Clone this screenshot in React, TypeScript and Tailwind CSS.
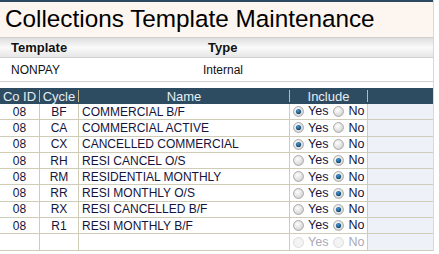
import React from "react";

type Row = { co: string; cycle: string; name: string; yes: boolean | null };

const rows: Row[] = [
  { co: "08", cycle: "BF", name: "COMMERCIAL B/F", yes: true },
  { co: "08", cycle: "CA", name: "COMMERCIAL ACTIVE", yes: true },
  { co: "08", cycle: "CX", name: "CANCELLED COMMERCIAL", yes: true },
  { co: "08", cycle: "RH", name: "RESI CANCEL O/S", yes: false },
  { co: "08", cycle: "RM", name: "RESIDENTIAL MONTHLY", yes: false },
  { co: "08", cycle: "RR", name: "RESI MONTHLY O/S", yes: false },
  { co: "08", cycle: "RX", name: "RESI CANCELLED B/F", yes: false },
  { co: "08", cycle: "R1", name: "RESI MONTHLY B/F", yes: false },
];

function Radio({ checked, disabled }: { checked: boolean; disabled?: boolean }) {
  return (
    <svg width="11" height="11" viewBox="0 0 12 12" className="shrink-0">
      <defs>
        <radialGradient id="rg" cx="40%" cy="35%" r="70%">
          <stop offset="0%" stopColor="#ffffff" />
          <stop offset="100%" stopColor="#d0d0d0" />
        </radialGradient>
        <radialGradient id="dot" cx="40%" cy="35%" r="70%">
          <stop offset="0%" stopColor="#4a9ad0" />
          <stop offset="100%" stopColor="#0b3d66" />
        </radialGradient>
      </defs>
      <circle
        cx="6"
        cy="6"
        r="5.4"
        fill={disabled ? "#f4f4f4" : "url(#rg)"}
        stroke={disabled ? "#d8d8d8" : "#a4a4a4"}
        strokeWidth="1"
      />
      {checked && <circle cx="6" cy="6" r="2.8" fill="url(#dot)" />}
    </svg>
  );
}

function Include({ yes, disabled }: { yes: boolean | null; disabled?: boolean }) {
  const txt = disabled ? "text-[#a9a9b8]" : "text-[#14143c]";
  return (
    <div className={`flex items-center pl-[3px] text-[12.5px] ${txt}`}>
      <Radio checked={yes === true} disabled={disabled} />
      <span className="ml-[4px]">Yes</span>
      <span className="ml-[5px]">
        <Radio checked={yes === false} disabled={disabled} />
      </span>
      <span className="ml-[4px]">No</span>
    </div>
  );
}

export default function App() {
  return (
    <div
      className="w-[439px] h-[254px] bg-white overflow-hidden"
      style={{ fontFamily: '"Liberation Sans", Arial, sans-serif' }}
    >
      <div className="w-[434px] border-r border-[#d8d8d8]">
        <div className="h-[2px] bg-[#2b4a60]" />
        <div className="h-[35px] bg-[#fdf6f0] pl-[5px] flex items-center text-[24.3px] leading-none text-black">
          Collections Template Maintenance
        </div>
        <div className="h-[20px] bg-gradient-to-b from-[#dedede] via-[#fafafa] to-[#e6e6e6] border-t border-[#cfcfcf] flex items-center text-[13px] font-bold text-[#111]">
          <div className="w-[208px] pl-[11px]">Template</div>
          <div>Type</div>
        </div>
        <div className="h-[25px] border-t border-b border-[#d0d0d0] flex items-center text-[12px] text-[#111]">
          <div className="w-[203px] pl-[11px]">NONPAY</div>
          <div>Internal</div>
        </div>
        <div className="h-[6px]" />
        <div className="text-[12px]">
          <div className="h-[16px] bg-[#2d4c62] text-[#e6edf2] grid grid-cols-[40px_39px_211px_78px_1fr] items-center text-[13px] leading-none">
            <div className="text-center border-r border-[#c9b98c] h-[12px] flex items-center justify-center">Co ID</div>
            <div className="text-center border-r border-[#c9b98c] h-[12px] flex items-center justify-center">Cycle</div>
            <div className="text-center border-r border-[#c9b98c] h-[12px] flex items-center justify-center">Name</div>
            <div className="text-center border-r border-[#c9b98c] h-[12px] flex items-center justify-center">Include</div>
            <div />
          </div>
          {[...rows, null].map((r, i) => (
            <div
              key={i}
              className="h-[16.3px] grid grid-cols-[40px_39px_211px_78px_1fr] border-b border-[#cfcdb8] text-[#14143c] leading-none"
            >
              <div className="border-r border-[#cfcdb8] flex items-center justify-center">{r ? r.co : ""}</div>
              <div className="border-r border-[#cfcdb8] flex items-center justify-center">{r ? r.cycle : ""}</div>
              <div className="border-r border-[#cfcdb8] flex items-center pl-[3px]">{r ? r.name : ""}</div>
              <div className="border-r border-[#cfcdb8] flex items-center">
                {r ? <Include yes={r.yes} /> : <Include yes={null} disabled />}
              </div>
              <div className="bg-[#eef2f8]" />
            </div>
          ))}
        </div>
      </div>
    </div>
  );
}
